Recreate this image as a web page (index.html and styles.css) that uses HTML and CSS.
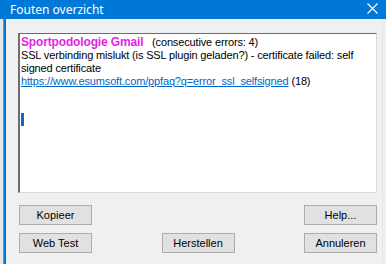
FILE: index.html
```html
<!DOCTYPE html>
<html lang="nl">
<head>
    <meta charset="UTF-8">
    <title>Fouten overzicht</title>
    <link rel="stylesheet" href="styles.css">
</head>
<body>
  <div class="window">
    <div class="titlebar">
      <span class="title">Fouten overzicht</span>
      <svg class="close" width="11" height="11" viewBox="0 0 11 11">
        <path d="M0.5 0.5 L10.5 10.5 M10.5 0.5 L0.5 10.5" stroke="#ffffff" stroke-width="1.1" fill="none"/>
      </svg>
    </div>

    <div class="frame">
      <div class="edge"></div>

      <div class="client">
        <div class="log">
          <div class="line"><span class="account">Sportpodologie Gmail</span>&nbsp;&nbsp; (consecutive errors: 4)</div>
          <div class="line">SSL verbinding mislukt (is SSL plugin geladen?) - certificate failed: self</div>
          <div class="line">signed certificate</div>
          <div class="line"><a href="#" class="faq">https://www.esumsoft.com/ppfaq?q=error_ssl_selfsigned</a> (18)</div>
          <div class="caret"></div>
        </div>

        <div class="buttons">
          <button class="btn">Kopieer</button>
          <span></span>
          <button class="btn">Help...</button>
          <button class="btn">Web Test</button>
          <button class="btn">Herstellen</button>
          <button class="btn">Annuleren</button>
        </div>
      </div>
    </div>
  </div>
</body>
</html>
```

FILE: styles.css
```css
body {
    margin: 0;
    background-color: #f0f0f0;
    font-family: Tahoma, "DejaVu Sans", "Liberation Sans", sans-serif;
    font-size: 11px;
    color: black;
    overflow: hidden;
}

.window {
    width: 386px;
    height: 264px;
}

.titlebar {
    height: 19px;
    background-color: #0078d7;
    color: white;
    display: flex;
    align-items: center;
    justify-content: space-between;
    padding: 0 8px 0 10px;
    font-family: "Noto Sans", "Open Sans", sans-serif;
    font-size: 12px;
}

.title {
    margin-top: -1px;
}

.close {
    margin-top: -2px;
}

.frame {
    display: flex;
    height: 245px;
}

.edge {
    width: 3px;
    margin-right: 2px;
    background-color: #e6e6e6;
    border-right: 1px solid #8c8c8c;
    box-shadow: 2px 0 0 #0078d7;
}

.client {
    flex: 1;
    padding: 14px 0 0 11px;
    margin-left: 1px;
    border-right: 1px solid #e4e4e4;
    margin-right: 3px;
}

.log {
    width: 355px;
    height: 156px;
    background-color: white;
    border-left: 2px solid #6e6e6e;
    border-top: 1px solid #6e6e6e;
    border-right: 1px solid #dadada;
    border-bottom: 1px solid #dadada;
    padding: 2px 0 0 1px;
    box-sizing: content-box;
    font-family: "Liberation Sans", Arial, sans-serif;
    font-size: 11px;
    letter-spacing: -0.15px;
}

.line {
    height: 13px;
    line-height: 13px;
    white-space: nowrap;
}

.account {
    color: #e61ee6;
    font-weight: bold;
    font-size: 12px;
}

.faq {
    color: #0066cc;
}

.caret {
    width: 3px;
    height: 13px;
    margin-top: 25px;
    background-color: #0a6ccc;
}

.buttons {
    width: 358px;
    margin: 12px 0 0 1px;
    display: grid;
    grid-template-columns: 73px 73px 73px;
    justify-content: space-between;
    row-gap: 8px;
}

.btn {
    height: 20px;
    margin: 0;
    padding: 0;
    background-color: #e1e1e1;
    border: 1px solid #adadad;
    font-family: "Liberation Sans", Arial, sans-serif;
    font-size: 11px;
    color: black;
}
```
